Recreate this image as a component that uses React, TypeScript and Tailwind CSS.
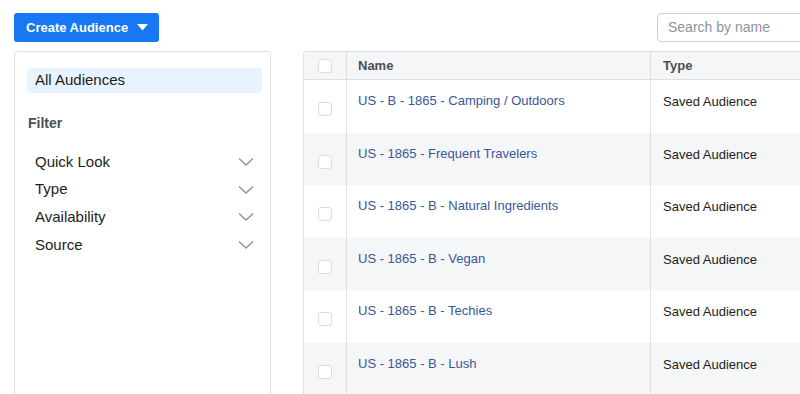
import React from "react";

const rows = [
  "US - B - 1865 - Camping / Outdoors",
  "US - 1865 - Frequent Travelers",
  "US - 1865 - B - Natural Ingredients",
  "US - 1865 - B - Vegan",
  "US - 1865 - B - Techies",
  "US - 1865 - B - Lush",
];

const filters = ["Quick Look", "Type", "Availability", "Source"];

const Chevron = () => (
  <svg width="16" height="10" viewBox="0 0 16 10" className="text-[#8d949e]">
    <path d="M1 1.5 L8 8 L15 1.5" fill="none" stroke="currentColor" strokeWidth="1.4" />
  </svg>
);

const Checkbox = () => (
  <div className="w-[14px] h-[14px] rounded-[3px] border border-[#dadde1] bg-white" />
);

export default function App() {
  return (
    <div
      className="w-[800px] h-[394px] overflow-hidden bg-white text-[#1c1e21]"
      style={{ fontFamily: '"Liberation Sans", Arial, sans-serif' }}
    >
      {/* Top bar */}
      <div className="flex items-center h-[29px] mt-[13px] pl-[14px]">
        <button className="h-[29px] w-[145px] rounded-[3px] bg-[#1877f2] text-white text-[13px] font-bold flex items-center pl-[12px] gap-[9px]">
          Create Audience
          <svg width="11" height="7" viewBox="0 0 11 7">
            <path d="M0 0 H11 L5.5 6.5 Z" fill="white" />
          </svg>
        </button>
        <div className="ml-auto w-[160px] h-[29px] mr-[-17px] rounded-[4px] border border-[#ccd0d5] flex items-center pl-[10px] text-[14px] text-[#8d949e]">
          Search by name
        </div>
      </div>

      {/* Content */}
      <div className="flex mt-[9px] pl-[14px] gap-[32px]">
        {/* Sidebar */}
        <div className="w-[257px] shrink-0 h-[360px] rounded-[4px] border border-[#dddfe2] pl-[12px] pr-[8px] pt-[16px]">
          <div className="h-[25px] rounded-[4px] bg-[#e7f3ff] flex items-center pl-[8px] text-[15px]">
            All Audiences
          </div>
          <div className="mt-[20px] pl-[1px] text-[14px] font-bold text-[#4b4f56]">Filter</div>
          <div className="mt-[14px] pl-[8px] pr-[8px] flex flex-col">
            {filters.map((f) => (
              <div key={f} className="h-[27.7px] flex items-center justify-between text-[15px]">
                <span>{f}</span>
                <Chevron />
              </div>
            ))}
          </div>
        </div>

        {/* Table */}
        <div className="w-[600px] shrink-0 border-l border-t border-[#dddfe2] rounded-tl-[4px]">
          <div className="flex h-[28px] bg-[#f5f6f7] border-b border-[#dddfe2] text-[13px] font-bold text-[#4b4f56]">
            <div className="w-[43px] flex items-center justify-center border-r border-[#dddfe2]">
              <Checkbox />
            </div>
            <div className="w-[304px] flex items-center pl-[11px] border-r border-[#dddfe2]">Name</div>
            <div className="flex-1 flex items-center pl-[12px]">Type</div>
          </div>
          {rows.map((r, i) => (
            <div
              key={r}
              className={`flex h-[52.6px] text-[13px] ${i % 2 === 1 ? "bg-[#f5f6f7]" : "bg-white"}`}
            >
              <div className="w-[43px] flex justify-center pt-[22px] border-r border-[#dddfe2]">
                <Checkbox />
              </div>
              <div className="w-[304px] pl-[11px] pt-[11px] text-[#385898] border-r border-[#dddfe2]">{r}</div>
              <div className="flex-1 pl-[12px] pt-[12px]">Saved Audience</div>
            </div>
          ))}
        </div>
      </div>
    </div>
  );
}
